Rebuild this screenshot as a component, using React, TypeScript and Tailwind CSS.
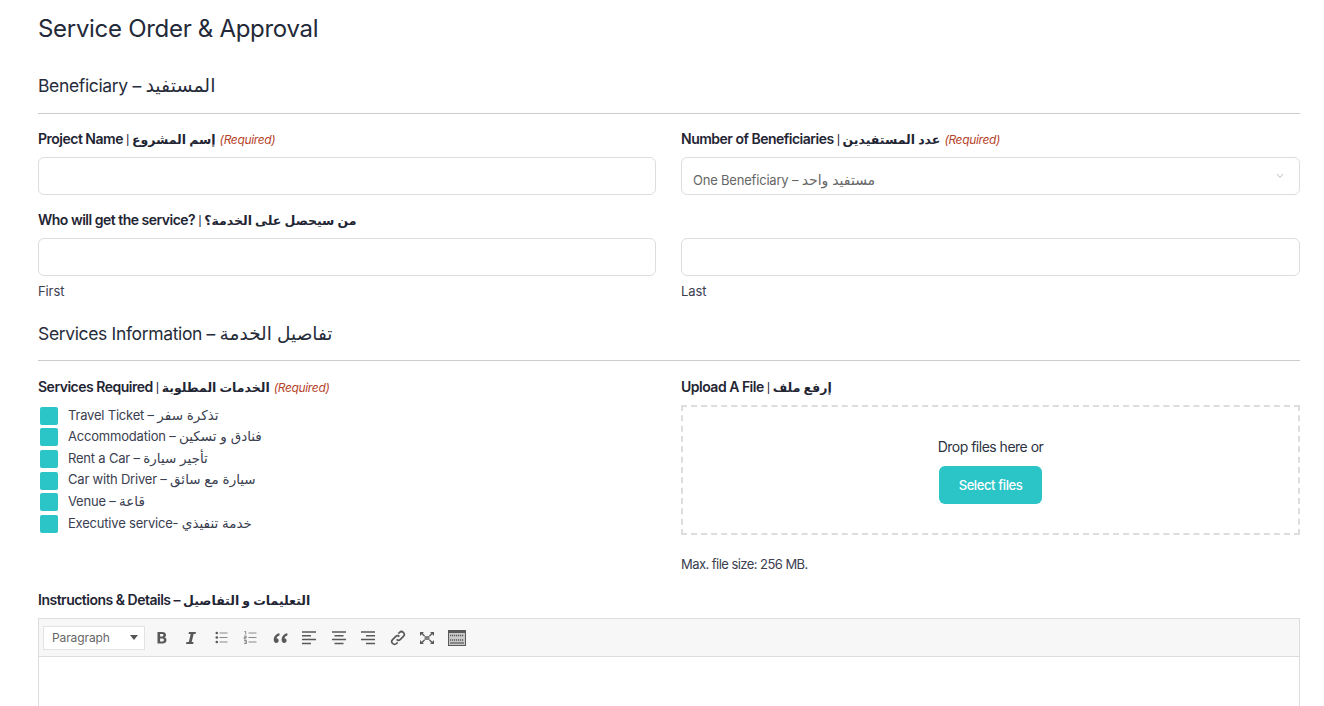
import React from "react";

const FONT = "[font-family:Inter,'DejaVu_Sans',sans-serif]";

function Req() {
  return <em className="mt-[2px] text-[12px] font-normal italic tracking-[-0.35px] text-[#b5432a]">(Required)</em>;
}

function Bar() {
  return <span className="mx-[3px] text-[10px] font-medium">|</span>;
}

function Ar({ children }: { children: React.ReactNode }) {
  return <span className="text-[12.500px] tracking-[0px]">{children}</span>;
}

function Label({ children, req, className = "" }: { children: React.ReactNode; req?: boolean; className?: string }) {
  return (
    <div className={"flex h-[18px] items-center gap-[4px] text-[14px] leading-[18px] font-semibold tracking-[-0.5px] text-[#1f2533] " + className}>
      <span>{children}</span>
      {req && <Req />}
    </div>
  );
}

function Input() {
  return <div className="h-[38px] rounded-[6px] border border-[#dddddd] bg-white" />;
}

function Section({ children, className = "" }: { children: React.ReactNode; className?: string }) {
  return (
    <div className={"h-[40px] border-b border-[#cccccc] text-[17.500px] leading-[24px] tracking-[-0.35px] text-[#262c3a] " + className}>
      {children}
    </div>
  );
}

const services = [
  ["Travel Ticket – ", "تذكرة سفر"],
  ["Accommodation – ", "فنادق و تسكين"],
  ["Rent a Car – ", "تأجير سيارة"],
  ["Car with Driver – ", "سيارة مع سائق"],
  ["Venue – ", "قاعة"],
  ["Executive service- ", "خدمة تنفيذي"],
];

const Ic = ({ children }: { children: React.ReactNode }) => (
  <svg width="16" height="16" viewBox="0 0 16 16" fill="none" className="shrink-0">
    {children}
  </svg>
);

function Toolbar() {
  const s = "#595959";
  return (
    <div className="flex h-[38px] items-center border-b border-[#dddddd] bg-[#f7f7f7] pl-[4px]">
      <div className="flex h-[24px] w-[102px] items-center justify-between border border-[#e3e3e3] bg-white pr-[6px] pl-[8px] text-[12px] tracking-[-0.1px] text-[#666666]">
        <span>Paragraph</span>
        <svg width="8" height="5" viewBox="0 0 8 5"><path d="M0 0h8L4 5z" fill="#555" /></svg>
      </div>
      <div className="ml-[8.500px] flex items-center gap-[13.500px]">
        <Ic>
          <path fillRule="evenodd" d="M3.500 2h4.800c2.300 0 3.700 1.100 3.700 3 0 1.100-.6 1.900-1.500 2.300 1.200.4 2 1.300 2 2.700 0 2.400-1.800 3.500-4 3.500H3.500V2zm2.600 2.100v2.400h2c.9 0 1.300-.5 1.300-1.200S9 4.100 8.100 4.100h-2zm0 4.400v3h2.300c1 0 1.500-.6 1.500-1.500S9.400 8.500 8.400 8.500H6.100z" fill={s} />
        </Ic>
        <Ic>
          <path d="M6 2h7l-.5 2H10.600L8.700 12h1.900l-.5 2H3l.5-2h2.300L7.700 4H5.500L6 2z" fill={s} />
        </Ic>
        <Ic>
          <path d="M6.500 3h8M6.500 7.500h8M6.500 12h8" stroke="#8a8a8a" strokeWidth="1" />
          <circle cx="3.800" cy="3" r="1.300" fill={s} /><circle cx="3.800" cy="7.500" r="1.300" fill={s} /><circle cx="3.800" cy="12" r="1.300" fill={s} />
        </Ic>
        <Ic>
          <path d="M6.500 3h8M6.500 7.500h8M6.500 12h8" stroke="#8a8a8a" strokeWidth="1" />
          <path d="M2.500 1.500h1.200v3M2 6h2.200v1.500H2.200V9h2.200M2.200 10.500h2.200v3H2.200M2.700 12h1.500" stroke={s} strokeWidth=".7" />
        </Ic>
        <Ic>
          <path d="M7.300 3C4 4.300 1.700 6.300 1.700 9.600c0 2 1 3.400 2.600 3.400 1.400 0 2.400-1 2.400-2.400S5.700 8.300 4.500 8.300C4.700 7 5.800 6 7.600 5.200L7.300 3zM15.200 3c-3.300 1.300-5.600 3.300-5.600 6.600 0 2 1 3.400 2.600 3.400 1.400 0 2.400-1 2.400-2.400s-1-2.300-2.200-2.300c.2-1.300 1.300-2.300 3.100-3.100L15.200 3z" fill={s} />
        </Ic>
        <Ic>
          <path d="M1 2h14M1 5.800h9M1 9.600h14M1 13.400h9" stroke={s} strokeWidth="1.500" />
        </Ic>
        <Ic>
          <path d="M1 2h14M3.500 5.800h9M1 9.600h14M3.500 13.400h9" stroke={s} strokeWidth="1.500" />
        </Ic>
        <Ic>
          <path d="M1 2h14M6 5.800h9M1 9.600h14M6 13.400h9" stroke={s} strokeWidth="1.500" />
        </Ic>
        <Ic>
          <path d="M6.600 9.400a2.700 2.700 0 0 0 3.800 0l3-3a2.750 2.750 0 0 0-3.900-3.900L8.300 3.700M9.400 6.600a2.700 2.700 0 0 0-3.800 0l-3 3a2.750 2.750 0 0 0 3.900 3.900l1.200-1.200" stroke={s} strokeWidth="1.700" />
        </Ic>
        <Ic>
          <path d="M1 2h4L3.700 3.300 6 5.600 5 6.600 2.700 4.300 1 6V2zM15 2v4l-1.700-1.700L11 6.600l-1-1 2.300-2.300L11 2h4zM1 14v-4l1.700 1.700L5 9.400l1 1-2.300 2.300L5 14H1zM15 14h-4l1.300-1.300L10 10.400l1-1 2.300 2.300L15 10v4z" fill={s} />
          <rect x="5.500" y="6" width="5" height="4" fill={s} opacity=".75" />
        </Ic>
        <svg width="18" height="16" viewBox="0 0 18 16" className="-ml-[1px] shrink-0">
          <rect x=".5" y=".5" width="17" height="15" fill="#c9c9c9" stroke={s} />
          <rect x="1" y="1" width="16" height="2" fill={s} />
          <path d="M2 5.500h14M2 10h14" stroke={s} strokeWidth="1.300" strokeDasharray="1.200 .8" />
          <path d="M2 13h14" stroke={s} strokeWidth="1.200" />
        </svg>
      </div>
    </div>
  );
}

export default function App() {
  return (
    <div className={"h-[706px] w-[1324px] overflow-hidden bg-white pr-[24px] pl-[38px] " + FONT}>
      <h1 className="pt-[11px] text-[24px] leading-[35px] tracking-[-0.3px] text-[#232938]">Service Order &amp; Approval</h1>

      <Section className="mt-[28px]">Beneficiary – <span className="text-[19px]">المستفيد</span></Section>

      <div className="mt-[16px] grid grid-cols-[618px_619px] gap-x-[25px]">
        <div>
          <Label req>Project Name<Bar /><Ar>إسم المشروع</Ar></Label>
          <div className="mt-[9px]"><Input /></div>
        </div>
        <div>
          <Label req>Number of Beneficiaries<Bar /><Ar>عدد المستفيدين</Ar></Label>
          <div className="relative mt-[9px] flex h-[38px] items-center rounded-[6px] border border-[#dddddd] bg-white pt-[8px] pl-[11px] text-[13px] tracking-[-0.2px] text-[#666666]">
            <span className="whitespace-pre">One Beneficiary – <span className="text-[14px]">مستفيد واحد</span></span>
            <svg width="8" height="6" viewBox="0 0 8 6" className="absolute top-[15px] right-[15px]"><path d="M1 1l3 3.500L7 1" stroke="#bbbbbb" fill="none" /></svg>
          </div>
        </div>
      </div>

      <Label className="mt-[16px]">Who will get the service?<Bar /><Ar>من سيحصل على الخدمة؟</Ar></Label>

      <div className="mt-[9px] grid grid-cols-[618px_619px] gap-x-[25px] text-[13px] leading-[18px] tracking-[-0.1px] text-[#3a4050]">
        <div><Input /><div className="mt-[6px]">First</div></div>
        <div><Input /><div className="mt-[6px]">Last</div></div>
      </div>

      <Section className="mt-[21px]">Services Information – <span className="text-[18.500px]">تفاصيل الخدمة</span></Section>

      <div className="mt-[17px] grid grid-cols-[618px_619px] gap-x-[25px]">
        <div>
          <Label req>Services Required<Bar /><Ar>الخدمات المطلوبة</Ar></Label>
          <div className="mt-[9px] flex flex-col pl-[2px]">
            {services.map(([en, ar]) => (
              <div key={en} className="flex h-[21.600px] items-center gap-[10px] text-[13px] tracking-[-0.2px] text-[#3a4050]">
                <span className="h-[18px] w-[18px] shrink-0 rounded-[2px] bg-[#2bc4c7]" />
                <span className="-mt-[2px] whitespace-pre">{en}<span className="text-[13.500px]">{ar}</span></span>
              </div>
            ))}
          </div>
        </div>
        <div>
          <Label>Upload A File<Bar /><Ar>إرفع ملف</Ar></Label>
          <div className="mt-[9px] flex h-[130px] flex-col items-center border-2 border-dashed border-[#dddddd] pt-[30px] text-[14px] leading-[20px] tracking-[-0.5px] text-[#2d3343]">
            Drop files here or
            <div className="mt-[9px] flex h-[38px] w-[103px] items-center justify-center rounded-[6px] bg-[#2bc4c7] text-[13px] font-medium tracking-[-0.4px] text-white">Select files</div>
          </div>
          <div className="mt-[20px] text-[13px] leading-[18px] tracking-[-0.55px] text-[#3a4050]">Max. file size: 256 MB.</div>
        </div>
      </div>

      <Label className="mt-[18px]">Instructions &amp; Details – <Ar>التعليمات و التفاصيل</Ar></Label>

      <div className="mt-[9px] h-[200px] border border-[#dddddd] bg-white">
        <Toolbar />
      </div>
    </div>
  );
}
